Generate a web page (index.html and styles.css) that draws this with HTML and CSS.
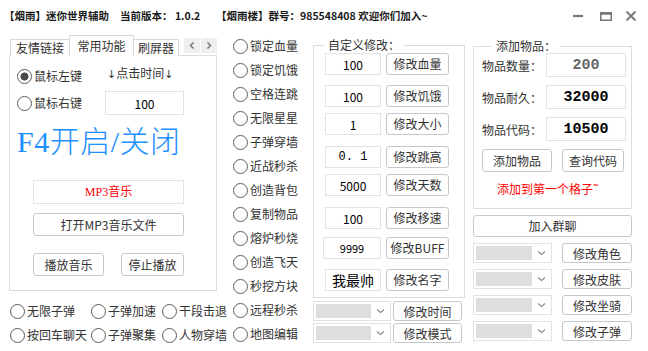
FILE: index.html
```html
<!DOCTYPE html>
<html lang="zh-CN">
<head>
<meta charset="utf-8">
<title>迷你世界辅助</title>
<link rel="stylesheet" href="styles.css">
</head>
<body>
<div class="window">
  <header class="titlebar">
    <span class="t1">【烟雨】迷你世界辅助</span>
    <span class="t2">当前版本： 1.0.2</span>
    <span class="t3">【烟雨楼】群号：985548408 欢迎你们加入~</span>
    <svg class="controls" width="78" height="32" viewBox="0 0 78 32">
      <line x1="3" y1="16" x2="13" y2="16" stroke="#777" stroke-width="2.2"/>
      <rect x="30.75" y="12.75" width="10.5" height="7.5" fill="none" stroke="#777" stroke-width="1.5"/>
      <line x1="30" y1="13.5" x2="42" y2="13.5" stroke="#777" stroke-width="2.5"/>
      <path d="M56.5 11.5 L65.5 20.5 M65.5 11.5 L56.5 20.5" stroke="#777" stroke-width="1.8" fill="none"/>
    </svg>
  </header>

  <main class="main">
    <section class="col-left">
      <div class="tabs">
        <div class="tab tab-a">友情链接</div>
        <div class="tab tab-b active">常用功能</div>
        <div class="tab tab-c">刷屏器</div>
        <div class="tab-arrows">
          <span class="arrow"><svg width="16" height="15" viewBox="0 0 16 15"><path d="M9.5 4.5 L6.5 7.5 L9.5 10.5" stroke="#777" stroke-width="1.5" fill="none"/></svg></span>
          <span class="arrow"><svg width="16" height="15" viewBox="0 0 16 15"><path d="M6.5 4.5 L9.5 7.5 L6.5 10.5" stroke="#777" stroke-width="1.5" fill="none"/></svg></span>
        </div>
      </div>
      <div class="panel">
        <div class="click-grid">
          <label class="radio checked"><i class="dot"></i>鼠标左键</label>
          <div class="hint"><span class="arr">↓</span>点击时间<span class="arr">↓</span></div>
          <label class="radio"><i class="dot"></i>鼠标右键</label>
          <input class="field click-field" value="100">
        </div>
        <div class="hotkey">F4开启/关闭</div>
        <div class="mp3">MP3音乐</div>
        <button class="btn open-btn">打开MP3音乐文件</button>
        <div class="play-row">
          <button class="btn play-btn">播放音乐</button>
          <button class="btn stop-btn">停止播放</button>
        </div>
      </div>
      <div class="bottom-radios">
        <label class="radio"><i class="dot"></i>无限子弹</label>
        <label class="radio"><i class="dot"></i>子弹加速</label>
        <label class="radio"><i class="dot"></i>干段击退</label>
        <label class="radio"><i class="dot"></i>按回车聊天</label>
        <label class="radio"><i class="dot"></i>子弹聚集</label>
        <label class="radio"><i class="dot"></i>人物穿墙</label>
      </div>
    </section>

    <section class="col-mid">
      <label class="radio"><i class="dot"></i>锁定血量</label>
      <label class="radio"><i class="dot"></i>锁定饥饿</label>
      <label class="radio"><i class="dot"></i>空格连跳</label>
      <label class="radio"><i class="dot"></i>无限星星</label>
      <label class="radio"><i class="dot"></i>子弹穿墙</label>
      <label class="radio"><i class="dot"></i>近战秒杀</label>
      <label class="radio"><i class="dot"></i>创造背包</label>
      <label class="radio"><i class="dot"></i>复制物品</label>
      <label class="radio"><i class="dot"></i>熔炉秒烧</label>
      <label class="radio"><i class="dot"></i>创造飞天</label>
      <label class="radio"><i class="dot"></i>秒挖方块</label>
      <label class="radio"><i class="dot"></i>远程秒杀</label>
      <label class="radio"><i class="dot"></i>地图编辑</label>
    </section>

    <section class="col-custom">
      <fieldset class="group custom-group">
        <legend>自定义修改：</legend>
        <div class="mod-row"><input class="field mod-field" value="100"><button class="btn mod-btn">修改血量</button></div>
        <div class="mod-row"><input class="field mod-field" value="100"><button class="btn mod-btn">修改饥饿</button></div>
        <div class="mod-row"><input class="field mod-field" value="1"><button class="btn mod-btn">修改大小</button></div>
        <div class="mod-row"><input class="field mod-field mono" value="0. 1"><button class="btn mod-btn">修改跳高</button></div>
        <div class="mod-row"><input class="field mod-field" value="5000"><button class="btn mod-btn">修改天数</button></div>
        <div class="mod-row"><input class="field mod-field" value="100"><button class="btn mod-btn">修改移速</button></div>
        <div class="mod-row"><input class="field mod-field wide small" value="9999"><button class="btn mod-btn">修改BUFF</button></div>
        <div class="mod-row"><input class="field mod-field big" value="我最帅"><button class="btn mod-btn">修改名字</button></div>
      </fieldset>
      <div class="combo-row custom-combo">
        <div class="combo"><span class="combo-fill"></span><svg class="chev" width="19" height="12" viewBox="0 0 19 12"><path d="M6 4.5 L9.5 7.5 L13 4.5" stroke="#888" stroke-width="1.1" fill="none"/></svg></div>
        <button class="btn combo-btn">修改时间</button>
      </div>
      <div class="combo-row custom-combo">
        <div class="combo"><span class="combo-fill"></span><svg class="chev" width="19" height="12" viewBox="0 0 19 12"><path d="M6 4.5 L9.5 7.5 L13 4.5" stroke="#888" stroke-width="1.1" fill="none"/></svg></div>
        <button class="btn combo-btn">修改模式</button>
      </div>
    </section>

    <section class="col-right">
      <fieldset class="group item-group">
        <legend>添加物品：</legend>
        <div class="item-row"><span class="item-label">物品数量：</span><input class="field item-field dim" value="200"></div>
        <div class="item-row"><span class="item-label">物品耐久：</span><input class="field item-field" value="32000"></div>
        <div class="item-row"><span class="item-label">物品代码：</span><input class="field item-field" value="10500"></div>
        <div class="item-btns">
          <button class="btn add-btn">添加物品</button>
          <button class="btn query-btn">查询代码</button>
        </div>
        <div class="item-note">添加到第一个格子˜</div>
      </fieldset>
      <button class="btn join-btn">加入群聊</button>
      <div class="combo-row right-combo">
        <div class="combo"><span class="combo-fill"></span><svg class="chev" width="19" height="12" viewBox="0 0 19 12"><path d="M6 4.5 L9.5 7.5 L13 4.5" stroke="#888" stroke-width="1.1" fill="none"/></svg></div>
        <button class="btn combo-btn">修改角色</button>
      </div>
      <div class="combo-row right-combo">
        <div class="combo"><span class="combo-fill"></span><svg class="chev" width="19" height="12" viewBox="0 0 19 12"><path d="M6 4.5 L9.5 7.5 L13 4.5" stroke="#888" stroke-width="1.1" fill="none"/></svg></div>
        <button class="btn combo-btn">修改皮肤</button>
      </div>
      <div class="combo-row right-combo">
        <div class="combo"><span class="combo-fill"></span><svg class="chev" width="19" height="12" viewBox="0 0 19 12"><path d="M6 4.5 L9.5 7.5 L13 4.5" stroke="#888" stroke-width="1.1" fill="none"/></svg></div>
        <button class="btn combo-btn">修改坐骑</button>
      </div>
      <div class="combo-row right-combo">
        <div class="combo"><span class="combo-fill"></span><svg class="chev" width="19" height="12" viewBox="0 0 19 12"><path d="M6 4.5 L9.5 7.5 L13 4.5" stroke="#888" stroke-width="1.1" fill="none"/></svg></div>
        <button class="btn combo-btn">修改子弹</button>
      </div>
    </section>
  </main>
</div>
</body>
</html>
```

FILE: styles.css
```css
* { box-sizing: border-box; }
html, body { margin: 0; padding: 0; }
body {
  width: 648px;
  height: 351px;
  overflow: hidden;
  background: #fff;
  font-family: "Noto Sans CJK SC", "Noto Sans", sans-serif;
  font-size: 12px;
  color: #333;
}
input, button { font: inherit; color: inherit; margin: 0; }

/* title bar */
.titlebar {
  display: flex;
  align-items: center;
  height: 32px;
  font-size: 10.5px;
  font-weight: bold;
  color: #1a1a1a;
  line-height: 14px;
}
.t1 { width: 120px; padding-left: 4px; }
.t2 { width: 96px; }
.t3 { white-space: nowrap; }
.controls { margin-left: auto; display: block; }

/* main layout */
.main { display: flex; height: 319px; }
.col-left { width: 224px; margin-left: 9px; padding-top: 3px; }
.col-mid { width: 80px; padding-top: 2px; }
.col-custom { width: 152px; }
.col-right { width: 159px; margin-left: 8px; }

/* radios */
.radio {
  display: flex;
  align-items: center;
  height: 24px;
  line-height: 24px;
  white-space: nowrap;
  color: #333;
}
.dot {
  flex: none;
  display: inline-block;
  width: 15px;
  height: 15px;
  border: 1px solid #5c5c5c;
  border-radius: 50%;
  margin-right: 2px;
  background: #fff;
}
.checked .dot {
  background: radial-gradient(circle, #4a4a4a 0 3.6px, #fff 4.4px);
}

/* tabs */
.tabs {
  display: flex;
  align-items: flex-end;
  height: 21px;
  margin-bottom: -1px;
  padding-left: 1px;
}
.tab {
  height: 17px;
  border: 1px solid #d9d9d9;
  border-bottom: none;
  background: #fff;
  line-height: 16px;
  text-align: center;
  color: #333;
}
.tab-a { width: 60px; }
.tab-b { width: 65px; margin-left: -1px; }
.tab-c { width: 46px; margin-left: -1px; }
.tab.active {
  height: 21px;
  line-height: 20px;
  position: relative;
  z-index: 1;
}
.tab-arrows {
  display: flex;
  gap: 1px;
  align-self: flex-start;
  margin-top: 3px;
  margin-left: 5px;
}
.arrow {
  display: block;
  width: 16px;
  height: 15px;
  background: #efefef;
}
.arrow svg { display: block; }

/* panel */
.panel {
  width: 208px;
  height: 236px;
  border: 1px solid #dcdcdc;
  padding-top: 8px;
}
.click-grid {
  display: grid;
  grid-template-columns: 88px 79px;
  grid-template-rows: 24px 24px;
  row-gap: 3px;
  margin-left: 7px;
}
.hint {
  align-self: start;
  line-height: 18px;
  padding-left: 2px;
  color: #333;
  white-space: nowrap;
}
.arr {
  font-family: "DejaVu Sans", sans-serif;
  font-variant-emoji: text;
  font-size: 11px;
  color: #333;
}
.field {
  border: 1px solid #e2e2e2;
  background: #fff;
  text-align: center;
  color: #000;
  padding: 0;
  outline: none;
}
.click-field { height: 24px; width: 79px; }
.hotkey {
  margin-top: 12px;
  margin-left: 7px;
  font-size: 30px;
  line-height: 30px;
  font-weight: 300;
  color: #1e90ff;
  font-family: "Liberation Serif", "Noto Sans CJK SC", serif;
  white-space: nowrap;
  letter-spacing: 0.5px;
}
.mp3 {
  margin-top: 23px;
  margin-left: 23px;
  width: 151px;
  height: 24px;
  border: 1px solid #e2e2e2;
  text-align: center;
  line-height: 22px;
  color: #ff0000;
  font-family: "Liberation Serif", "Noto Sans CJK SC", serif;
}
.btn {
  display: block;
  background: #fff;
  border: 1px solid #c8c8c8;
  border-radius: 3px;
  color: #333;
  padding: 0;
  text-align: center;
  line-height: 18px;
  white-space: nowrap;
}
.open-btn {
  margin-top: 9px;
  margin-left: 23px;
  width: 151px;
  height: 23px;
}
.play-row {
  display: flex;
  gap: 17px;
  margin-top: 17px;
  margin-left: 23px;
}
.play-btn { width: 71px; height: 23px; }
.stop-btn { width: 63px; height: 23px; }

.bottom-radios {
  display: grid;
  grid-template-columns: 81px 71px 72px;
  grid-auto-rows: 24px;
  margin-top: 8px;
  padding-left: 1px;
}

/* groups */
.group {
  margin: 0;
  padding: 0;
  border: 1px solid #dcdcdc;
  min-width: 0;
}
.group legend {
  margin-left: 10px;
  padding: 0 4px;
  line-height: 14px;
  font-size: 12px;
  color: #333;
}
.custom-group {
  width: 152px;
  margin-top: 6px;
  padding-bottom: 6px;
}
.mod-row {
  display: flex;
  gap: 5px;
  margin-left: 11px;
  height: 22px;
}
.mod-row:nth-of-type(1) { margin-top: 1px; }
.mod-row:nth-of-type(2) { margin-top: 10px; }
.mod-row:nth-of-type(3) { margin-top: 6px; }
.mod-row:nth-of-type(4) { margin-top: 11px; }
.mod-row:nth-of-type(5) { margin-top: 6px; }
.mod-row:nth-of-type(6) { margin-top: 11px; }
.mod-row:nth-of-type(7) { margin-top: 8px; }
.mod-row:nth-of-type(8) { margin-top: 10px; }
.mod-field { width: 56px; height: 22px; }
.mod-field.wide { width: 58px; margin-left: -2px; }
.mod-field.small { font-size: 11px; }
.mod-field.big { font-size: 14px; }
.mod-field.mono { font-family: "Liberation Mono", monospace; font-size: 12px; }
.mod-btn { width: 63px; height: 22px; }

/* combos */
.combo-row { display: flex; }
.combo {
  display: flex;
  align-items: center;
  height: 20px;
  border: 1px solid #e2e2e2;
  padding: 2px 0 2px 2px;
  background: #fff;
}
.combo-fill {
  flex: 1;
  height: 14px;
  background: #dedede;
}
.chev { display: block; flex: none; }
.combo-btn { height: 20px; line-height: 17px; }

.custom-combo { gap: 2px; }
.custom-combo:nth-of-type(1) { margin-top: 3px; }
.custom-combo + .custom-combo { margin-top: 2px; }
.custom-combo .combo { width: 78px; }
.custom-combo .combo-btn { width: 69px; }

.item-group {
  width: 159px;
  margin-top: 7px;
  padding: 0 0 11px 8px;
}
.item-row {
  display: flex;
  align-items: center;
  height: 24px;
}
.item-row + .item-row { margin-top: 8px; }
.item-label { width: 64px; color: #333; }
.item-field {
  width: 80px;
  height: 24px;
  font-family: "Liberation Mono", monospace;
  font-weight: bold;
  font-size: 15px;
}
.item-field.dim { color: #666; }
.item-btns {
  display: flex;
  gap: 10px;
  margin-top: 8px;
}
.add-btn { width: 70px; height: 23px; }
.query-btn { width: 62px; height: 23px; }
.item-note {
  margin-top: 9px;
  margin-left: 15px;
  line-height: 16px;
  color: #ff0000;
}
.join-btn {
  width: 159px;
  height: 22px;
  margin-top: 6px;
}
.right-combo { gap: 10px; margin-top: 6px; }
.right-combo .combo { width: 79px; }
.right-combo .combo-btn { width: 70px; }
```
